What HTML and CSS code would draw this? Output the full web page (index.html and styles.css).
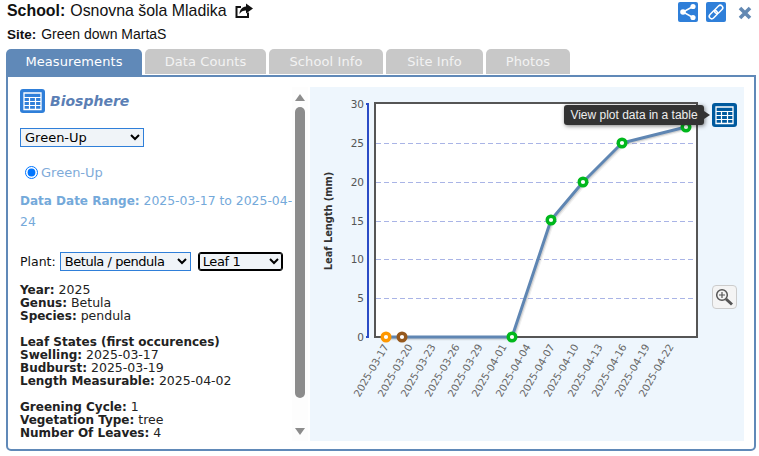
FILE: index.html
```html
<!DOCTYPE html>
<html lang="en">
<head>
<meta charset="utf-8">
<title>Biosphere</title>
<link rel="stylesheet" href="styles.css">
</head>
<body>
<svg class="defs" width="0" height="0" aria-hidden="true">
  <symbol id="tbl" viewBox="0 0 25 24">
    <rect x="0" y="0" width="25" height="24" rx="3" fill="currentColor"/>
    <path d="M4 4h17v16.500H4z" fill="none" stroke="#fff" stroke-width="1.300"/>
    <path d="M4 8.500h17M4 12.500h17M4 16.500h17M9.500 8.500v12M15.500 8.500v12" stroke="#fff" stroke-width="1.200" fill="none"/>
  </symbol>
</svg>
<header class="top">
  <div class="titles">
    <div class="school"><b>School:</b> Osnovna šola Mladika
      <svg class="open" viewBox="0 0 18 16" width="18" height="16"><path d="M13 9.500v4.500H1.500V4H6" fill="none" stroke="#111" stroke-width="2"/><path d="M11 0.500l7 5-7 5V7.500c-3 0-5 1-6.500 3.500 0-4 2.500-7 6.500-7.500z" fill="#111"/></svg>
    </div>
    <div class="site"><b>Site:</b> Green down MartaS</div>
  </div>
  <div class="actions">
    <span class="act"><svg viewBox="0 0 20 20" width="20" height="20"><rect width="20" height="20" rx="2" fill="#2f7fd9"/><path d="M15 4.500L5 10l10 5.500" fill="none" stroke="#fff" stroke-width="1.500"/><circle cx="15" cy="4.500" r="2.600" fill="#fff"/><circle cx="5" cy="10" r="2.800" fill="#fff"/><circle cx="15" cy="15.500" r="2.600" fill="#fff"/></svg></span>
    <span class="act"><svg viewBox="0 0 20 20" width="20" height="20"><rect width="20" height="20" rx="2" fill="#2f7fd9"/><g transform="rotate(-45 10 10)" fill="none" stroke="#fff" stroke-width="1.500"><rect x="1.500" y="7.500" width="9.500" height="5" rx="2.500"/><rect x="9" y="7.500" width="9.500" height="5" rx="2.500"/></g></svg></span>
    <span class="act close"><svg viewBox="0 0 14 14" width="14" height="14"><path d="M2 2l10 10M12 2L2 12" stroke="#6389b3" stroke-width="3.600" fill="none"/></svg></span>
  </div>
</header>
<nav class="tabs">
  <span class="tab active">Measurements</span>
  <span class="tab t2">Data Counts</span>
  <span class="tab t3">School Info</span>
  <span class="tab t4">Site Info</span>
  <span class="tab t5">Photos</span>
</nav>
<main class="panel">
  <section class="side">
    <div class="sidebody">
      <div class="heading"><svg class="hicon"><use href="#tbl"/></svg><span>Biosphere</span></div>
      <select class="sel wide"><option>Green-Up</option></select>
      <label class="radio"><input type="radio" checked><span>Green-Up</span></label>
      <p class="range"><b>Data Date Range:</b> 2025-03-17 to 2025-04-24</p>
      <div class="plant">
        <span>Plant:</span>
        <select class="sel pl"><option>Betula / pendula</option></select>
        <select class="sel leaf"><option>Leaf 1</option></select>
      </div>
      <p class="info"><b>Year:</b> 2025<br><b>Genus:</b> Betula<br><b>Species:</b> pendula</p>
      <p class="info"><b>Leaf States (first occurences)</b><br><b>Swelling:</b> 2025-03-17<br><b>Budburst:</b> 2025-03-19<br><b>Length Measurable:</b> 2025-04-02</p>
      <p class="info"><b>Greening Cycle:</b> 1<br><b>Vegetation Type:</b> tree<br><b>Number Of Leaves:</b> 4</p>
    </div>
    <div class="scroll"><i class="up"></i><i class="thumb"></i><i class="down"></i></div>
  </section>
  <section class="chart">
    <svg class="plot" viewBox="310 87 434 354" width="434" height="354">
      <rect x="375" y="103" width="322" height="234" fill="#fff"/>
      <g class="grid">
        <path d="M376 143.500H696M376 182.500H696M376 221.500H696M376 259.500H696M376 298.500H696"/>
      </g>
      <rect x="375" y="103" width="322" height="234" fill="none" stroke="#555" stroke-width="2"/>
      <path d="M366 104h2v233h-2" fill="none" stroke="#2b4cc6" stroke-width="2"/>
      <g class="ylab">
        <text x="364" y="108">30</text><text x="364" y="147">25</text><text x="364" y="186">20</text><text x="364" y="225">15</text><text x="364" y="263">10</text><text x="364" y="302">5</text><text x="364" y="341">0</text>
      </g>
      <text class="ytitle" transform="translate(332 221) rotate(-90)" text-anchor="middle">Leaf Length (mm)</text>
      <g class="xlab">
        <text transform="translate(389 346.500) rotate(-60)">2025-03-17</text>
        <text transform="translate(413 346.500) rotate(-60)">2025-03-20</text>
        <text transform="translate(436 346.500) rotate(-60)">2025-03-23</text>
        <text transform="translate(460 346.500) rotate(-60)">2025-03-26</text>
        <text transform="translate(483 346.500) rotate(-60)">2025-03-29</text>
        <text transform="translate(507 346.500) rotate(-60)">2025-04-01</text>
        <text transform="translate(531 346.500) rotate(-60)">2025-04-04</text>
        <text transform="translate(555 346.500) rotate(-60)">2025-04-07</text>
        <text transform="translate(579 346.500) rotate(-60)">2025-04-10</text>
        <text transform="translate(603 346.500) rotate(-60)">2025-04-13</text>
        <text transform="translate(627 346.500) rotate(-60)">2025-04-16</text>
        <text transform="translate(650 346.500) rotate(-60)">2025-04-19</text>
        <text transform="translate(674 346.500) rotate(-60)">2025-04-22</text>
      </g>
      <path class="shadow s3" d="M386 337H512L551 220L583 182L622 143L686 127"/>
      <path class="shadow s2" d="M386 337H512L551 220L583 182L622 143L686 127"/>
      <path class="line" d="M386 337H512L551 220L583 182L622 143L686 127"/>
      <g class="pts">
        <circle cx="386" cy="337" r="3.800" stroke="#ff9800"/>
        <circle cx="402" cy="337" r="3.800" stroke="#96591e"/>
        <circle cx="512" cy="337" r="3.800" stroke="#00b81c"/>
        <circle cx="551" cy="220" r="3.800" stroke="#00b81c"/>
        <circle cx="583" cy="182" r="3.800" stroke="#00b81c"/>
        <circle cx="622" cy="143" r="3.800" stroke="#00b81c"/>
        <circle cx="686" cy="127" r="3.800" stroke="#00b81c"/>
      </g>
    </svg>
    <div class="tip">View plot data in a table</div>
    <svg class="tblbtn"><use href="#tbl"/></svg>
    <span class="zoombtn"><svg viewBox="0 0 20 20" width="20" height="20"><circle cx="7" cy="8" r="5.300" fill="none" stroke="#555" stroke-width="1.500"/><path d="M7 5v6M4 8h6" stroke="#555" stroke-width="1.200"/><path d="M11 12l6 5.500" stroke="#555" stroke-width="3"/></svg></span>
  </section>
</main>
</body>
</html>
```
FILE: styles.css
```css
* { box-sizing: border-box; }
html, body { margin: 0; padding: 0; }
body { width: 759px; height: 456px; background: #fff; overflow: hidden; font-family: "DejaVu Sans", sans-serif; color: #111; }
.defs { position: absolute; }
.top { height: 49px; padding: 2px 6px 0 7px; display: flex; justify-content: space-between; font-family: "Liberation Sans", sans-serif; }
.school { font-size: 15.900px; line-height: 18px; display: flex; align-items: center; gap: 5px; }
.open { margin-left: 3px; margin-top: -1px; }
.site { font-size: 14px; line-height: 16px; margin-top: 6px; }
.site b { font-size: 13.500px; line-height: 1; margin-right: 1px; }
.actions { display: flex; gap: 8px; padding-right: 1px; align-items: flex-start; }
.act { display: block; height: 20px; }
.close { margin-left: 4px; padding-top: 4px; }
.tabs { display: flex; height: 26px; margin-left: 6px; gap: 3px; font-size: 13px; }
.tab { height: 25px; background: #c8c8c8; color: #f3f3f3; border-radius: 5px 5px 0 0; line-height: 26px; text-align: center; letter-spacing: 0.1px; width: 121px; }
.active { height: 27px; width: 136px; background: #6089b8; color: #fff; }
.t3 { width: 114px; }
.t4 { width: 97px; }
.t5 { width: 84px; }
.panel { width: 750px; height: 376px; margin-left: 6px; border: 2px solid #6089b8; border-radius: 0 0 5px 5px; background: #fff; display: flex; padding: 10px 10px 8px 12px; }
.side { width: 290px; display: flex; font-size: 12.500px; }
.side b { font-size: 12px; line-height: 1; }
.sidebody { width: 272px; padding-top: 2px; }
.heading { display: flex; align-items: center; gap: 5px; height: 24px; color: #5b7fb5; font-weight: bold; font-style: italic; font-size: 14px; }
.hicon { width: 25px; height: 24px; color: #2f7fd9; }
.sel { font-family: "DejaVu Sans", sans-serif; font-size: 13px; background: #f0f4f8; border: 1px solid #2f7fd9; border-radius: 0; color: #000; padding: 0; height: 19px; }
.wide { display: block; width: 124px; margin-top: 15px; }
.radio { display: flex; align-items: center; gap: 3px; margin: 15px 0 0 5px; color: #7fabd9; font-size: 13px; height: 20px; }
.radio input { margin: 0; width: 13px; height: 13px; accent-color: #0075ff; }
.range { margin: 8px -4px 0 0; color: #74a9da; font-size: 12.400px; line-height: 21px; }
.plant { display: flex; align-items: center; gap: 7px; margin-top: 20px; height: 19px; font-size: 12.500px; }
.plant span { margin-right: -3px; }
.pl { width: 131px; letter-spacing: -0.45px; }
.leaf { width: 85px; letter-spacing: -0.4px; border-color: #000; border-radius: 3px; box-shadow: inset 0 0 0 1px #000; }
.info { margin: 0 0 13px; line-height: 13px; color: #222; }
.plant + .info { margin-top: 12px; }
.scroll { width: 16px; height: 354px; display: flex; flex-direction: column; align-items: center; background: #fdfdfd; }
.scroll i { display: block; }
.up { width: 0; height: 0; margin-top: 7px; border: 5px solid transparent; border-top: 0; border-bottom: 7px solid #8c8c8c; }
.thumb { width: 10px; height: 291px; margin-top: 6px; background: #8c8c8c; border-radius: 5px; }
.down { width: 0; height: 0; margin-top: 30px; border: 5px solid transparent; border-bottom: 0; border-top: 7px solid #8c8c8c; }
.chart { width: 434px; height: 354px; background: #eef6fd; position: relative; }
.plot { display: block; font-family: "DejaVu Sans", sans-serif; }
.grid path { stroke: #a9b4e6; stroke-width: 1; stroke-dasharray: 5 3; fill: none; }
.ylab text { font-size: 10.500px; fill: #555; text-anchor: end; }
.ytitle { font-size: 9.800px; font-weight: bold; fill: #333; }
.xlab text { font-size: 10.200px; fill: #666; text-anchor: end; }
.line { fill: none; stroke: #5f86b3; stroke-width: 3; stroke-linejoin: round; }
.shadow { fill: none; stroke: #000; stroke-linejoin: round; }
.s3 { stroke-width: 3; opacity: 0.06; transform: translate(2px, 2px); }
.s2 { stroke-width: 3; opacity: 0.12; transform: translate(1px, 1px); }
.pts circle { fill: #fff; stroke-width: 3.400; }
.tip { position: absolute; left: 254px; top: 18px; width: 140px; height: 20px; background: #333; color: #eee; font-family: "Liberation Sans", sans-serif; font-size: 12px; line-height: 20px; text-align: center; border-radius: 3px; box-shadow: 1px 1px 4px rgba(0,0,0,.5); }
.tip::after { content: ""; position: absolute; left: 100%; top: 6px; border: 4px solid transparent; border-left: 6px solid #333; border-right: 0; }
.tblbtn { position: absolute; left: 402px; top: 16px; width: 25px; height: 24px; color: #005a9e; }
.zoombtn { position: absolute; left: 402px; top: 198px; width: 25px; height: 24px; border: 1px solid #ccc; border-radius: 4px; background: #f4f4f4; display: flex; align-items: center; justify-content: center; }
```
